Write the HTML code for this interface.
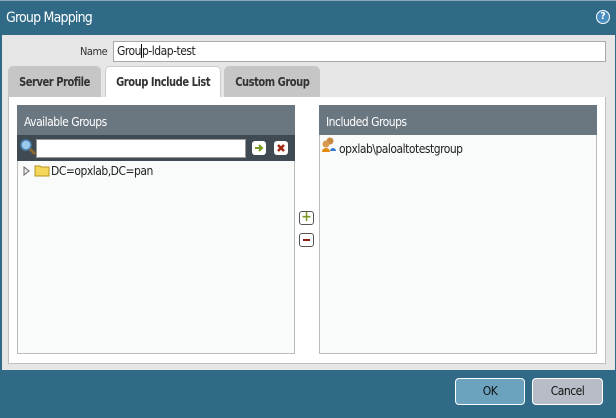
<!DOCTYPE html>
<html><head><style>
*{margin:0;padding:0;box-sizing:border-box}
body{width:616px;height:418px;background:#306a87;font-family:"DejaVu Sans Condensed","Liberation Sans",sans-serif;font-size:12px;color:#222;position:relative;overflow:hidden;letter-spacing:-0.5px}
.a{position:absolute}
.t{display:inline-block;transform:scaleX(0.92);white-space:nowrap}
</style></head><body>
<div class="a" style="left:0;top:0;width:616px;height:1px;background:#8aa8b8"></div>
<div class="a" style="left:6px;top:10px;color:#fff;font-size:14px;letter-spacing:-0.8px">Group Mapping</div>
<div class="a" style="left:596px;top:10px;width:14px;height:14px;border-radius:50%;background:#4a8ec0;border:1.5px solid #fff;color:#fff;font-size:10px;font-weight:bold;text-align:center;line-height:11px;letter-spacing:0">?</div>
<div class="a" style="left:2px;top:35px;width:613px;height:335px;background:#e6e6e6"></div>
<div class="a" style="left:80px;top:45px;font-size:11px;color:#333">Name</div>
<div class="a" style="left:113px;top:41px;width:493px;height:21px;background:#fff;border:1px solid #aaa;padding:2px 3px;font-size:12px">Grou<span style="border-left:1px solid #000"></span>p-ldap-test</div>
<div class="a" style="left:8px;top:66px;width:93px;height:31px;background:#c6c6c6;border-radius:5px 5px 0 0;font-weight:bold;font-size:12px;text-align:center;line-height:32px;color:#333"><span class="t">Server Profile</span></div>
<div class="a" style="left:105px;top:66px;width:116px;height:32px;background:#fff;border:1px solid #ccc;border-bottom:none;border-radius:5px 5px 0 0;font-weight:bold;font-size:12px;text-align:center;line-height:31px;color:#333"><span class="t">Group Include List</span></div>
<div class="a" style="left:224px;top:66px;width:96px;height:31px;background:#c6c6c6;border-radius:5px 5px 0 0;font-weight:bold;font-size:12px;text-align:center;line-height:32px;color:#333"><span class="t">Custom Group</span></div>
<div class="a" style="left:8px;top:97px;width:598px;height:267px;background:#fff;border:1px solid #c0c0c0;border-top:none"></div>
<div class="a" style="left:17px;top:105px;width:278px;height:249px;background:#f9fbfb;border:1px solid #bbb"></div>
<div class="a" style="left:17px;top:105px;width:278px;height:30px;background:#6b7780;color:#fff;font-size:12px;padding:10px 7px">Available Groups</div>
<div class="a" style="left:17px;top:135px;width:278px;height:26px;background:#3f4a52"></div>
<svg class="a" style="left:19px;top:138px" width="18" height="18"><circle cx="7" cy="7" r="5" fill="#9cc8ee" stroke="#4a7fb0" stroke-width="1.5"/><line x1="11" y1="11" x2="16" y2="16" stroke="#8a6a30" stroke-width="3"/></svg>
<div class="a" style="left:36px;top:139px;width:210px;height:19px;background:#fff;border:1px solid #999"></div>
<div class="a" style="left:252px;top:141px;width:14px;height:14px;background:#fff;border-radius:3px"></div>
<svg class="a" style="left:252px;top:141px" width="14" height="14"><path d="M3 7h6M7 4l3 3-3 3" stroke="#7a9a20" stroke-width="2" fill="none"/></svg>
<div class="a" style="left:274px;top:141px;width:14px;height:14px;background:#fff;border-radius:3px"></div>
<svg class="a" style="left:274px;top:141px" width="14" height="14"><path d="M4 4l6 6M10 4l-6 6" stroke="#a02810" stroke-width="2.5"/></svg>
<svg class="a" style="left:23px;top:166px" width="8" height="10"><path d="M1 1l5 4-5 4z" fill="#eee" stroke="#666"/></svg>
<svg class="a" style="left:34px;top:163px" width="16" height="14"><path d="M1 3h5l1 1h8v9H1z" fill="#f3d75a" stroke="#b89320"/></svg>
<div class="a" style="left:51px;top:164px;font-size:12px">DC=opxlab,DC=pan</div>
<div class="a" style="left:299px;top:211px;width:15px;height:14px;border:1px solid #555;border-radius:3px;background:#fff;color:#7a9a20;font-weight:bold;font-size:14px;line-height:11px;text-align:center;letter-spacing:0">+</div>
<div class="a" style="left:299px;top:233px;width:15px;height:14px;border:1px solid #555;border-radius:3px;background:#fff"><div style="margin:5px 3px;height:2px;background:#8a2010"></div></div>
<div class="a" style="left:319px;top:105px;width:278px;height:249px;background:#f9fbfb;border:1px solid #bbb"></div>
<div class="a" style="left:319px;top:105px;width:278px;height:30px;background:#6b7780;color:#fff;font-size:12px;padding:10px 7px">Included Groups</div>
<svg class="a" style="left:321px;top:137px" width="16" height="16"><circle cx="9" cy="4" r="3.5" fill="#c78840"/><circle cx="5" cy="7" r="3.5" fill="#d89a50"/><path d="M1 15a4 4 0 0 1 8 0z" fill="#e08a10"/><path d="M9 14a3 3 0 0 1 6 0z" fill="#3a7ad0"/></svg>
<div class="a" style="left:339px;top:142px;font-size:12px">opxlab\paloaltotestgroup</div>
<div class="a" style="left:455px;top:378px;width:70px;height:27px;background:#6ba3bf;border:1.5px solid #fff;border-radius:4px;text-align:center;line-height:24px;color:#111">OK</div>
<div class="a" style="left:532px;top:378px;width:71px;height:27px;background:#b8bcc6;border:1.5px solid #fff;border-radius:4px;text-align:center;line-height:24px;color:#111">Cancel</div>
</body></html>
